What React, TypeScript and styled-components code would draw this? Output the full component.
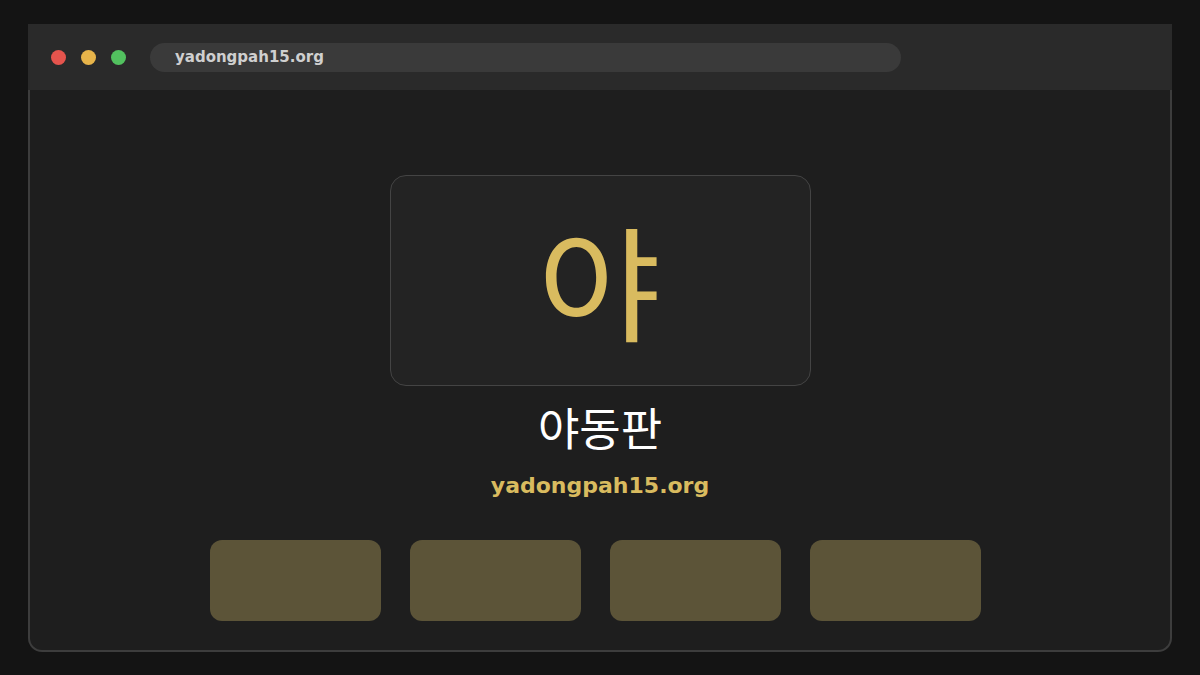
import React from "react";
import styled, { createGlobalStyle } from "styled-components";

const GlobalStyle = createGlobalStyle`
  html, body {
    margin: 0;
    padding: 0;
    background: #141414;
    font-family: "DejaVu Sans", "Noto Sans CJK KR", sans-serif;
  }
`;

const Page = styled.div`
  width: 1200px;
  height: 675px;
  padding: 24px 28px;
  box-sizing: border-box;
`;

const Window = styled.div`
  width: 1144px;
  display: flex;
  flex-direction: column;
`;

const TitleBar = styled.div`
  height: 66px;
  background: #2a2a2a;
  display: flex;
  align-items: center;
  padding: 0 0 0 23px;
  box-sizing: border-box;
`;

const Dot = styled.span<{ $color: string }>`
  width: 15px;
  height: 15px;
  border-radius: 50%;
  background: ${(p) => p.$color};
  margin-right: 15px;
`;

const UrlBar = styled.div`
  margin-left: 9px;
  width: 751px;
  height: 29px;
  border-radius: 15px;
  background: #3a3a3a;
  display: flex;
  align-items: center;
  padding-left: 25px;
  box-sizing: border-box;
  color: #cfcfcf;
  font-weight: bold;
  font-size: 15px;
`;

const Body = styled.div`
  height: 562px;
  box-sizing: border-box;
  background: #1e1e1e;
  border: 2px solid #3d3d3d;
  border-top: none;
  border-radius: 0 0 14px 14px;
  display: flex;
  flex-direction: column;
  align-items: center;
  padding-top: 85px;
`;

const Logo = styled.div`
  width: 421px;
  height: 211px;
  box-sizing: border-box;
  background: #232323;
  border: 1px solid #444;
  border-radius: 16px;
  display: flex;
  align-items: center;
  justify-content: center;
  padding-bottom: 6px;
  color: #d9bb5f;
  font-family: "Noto Sans CJK KR", sans-serif;
  font-size: 124px;
  line-height: 1;
`;

const LogoGlyph = styled.span`
  display: inline-block;
  transform: translateX(-1px) scaleX(1.08);
`;

const Name = styled.h1`
  margin: 13px 0 0;
  color: #fff;
  font-family: "Noto Sans CJK KR", sans-serif;
  font-weight: 400;
  font-size: 45px;
  line-height: 56px;
`;

const Domain = styled.div`
  margin-top: 17px;
  color: #d9bb5f;
  font-weight: bold;
  font-size: 22px;
  line-height: 28px;
`;

const Buttons = styled.div`
  margin-top: 40px;
  padding-right: 9px;
  display: flex;
  gap: 29px;
`;

const Tile = styled.div`
  width: 171px;
  height: 81px;
  border-radius: 12px;
  background: #5c5438;
`;

export default function App() {
  return (
    <>
      <GlobalStyle />
      <Page>
        <Window>
          <TitleBar>
            <Dot $color="#e5544d" />
            <Dot $color="#e7b44a" />
            <Dot $color="#52c15f" />
            <UrlBar>yadongpah15.org</UrlBar>
          </TitleBar>
          <Body>
            <Logo>
              <LogoGlyph>야</LogoGlyph>
            </Logo>
            <Name>야동판</Name>
            <Domain>yadongpah15.org</Domain>
            <Buttons>
              <Tile />
              <Tile />
              <Tile />
              <Tile />
            </Buttons>
          </Body>
        </Window>
      </Page>
    </>
  );
}
